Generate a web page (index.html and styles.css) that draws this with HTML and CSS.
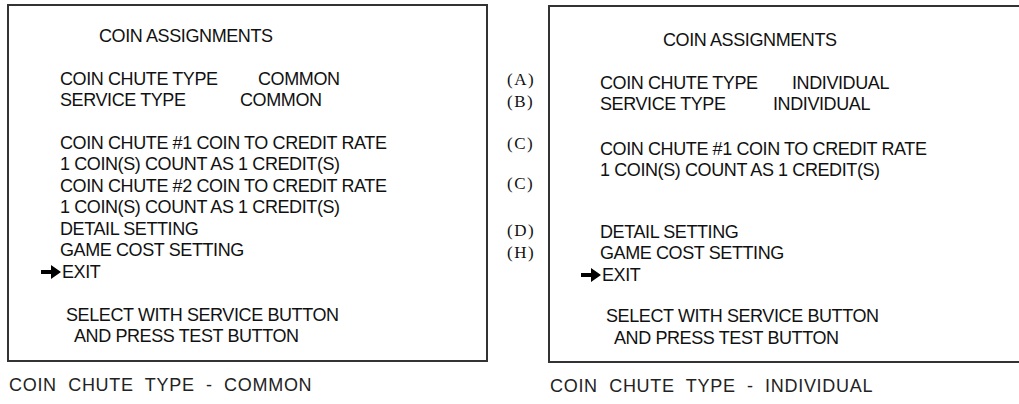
FILE: index.html
```html
<!DOCTYPE html>
<html lang="en">
<head>
  <meta charset="UTF-8" />
  <title>Coin Assignments</title>
  <link rel="stylesheet" href="styles.css">
</head>
<body>

  <div class="panel panel-common">
    <div class="screen">
      <div class="title">COIN ASSIGNMENTS</div>
      <div class="line gap-a"><span class="key">COIN CHUTE TYPE</span><span class="val-chute">COMMON</span></div>
      <div class="line"><span class="key">SERVICE TYPE</span><span class="val-service">COMMON</span></div>
      <div class="line gap-b">COIN CHUTE #1 COIN TO CREDIT RATE</div>
      <div class="line">1 COIN(S) COUNT AS 1 CREDIT(S)</div>
      <div class="line">COIN CHUTE #2 COIN TO CREDIT RATE</div>
      <div class="line">1 COIN(S) COUNT AS 1 CREDIT(S)</div>
      <div class="line">DETAIL SETTING</div>
      <div class="line">GAME COST SETTING</div>
      <div class="line exit">
        <svg class="arrow" width="20" height="14" viewBox="0 0 20 14"><path d="M0 5h10V0l10 7-10 7V9H0z" fill="#000"/></svg>EXIT
      </div>
      <div class="line foot">SELECT WITH SERVICE BUTTON</div>
      <div class="line foot2">AND PRESS TEST BUTTON</div>
    </div>
    <div class="caption">COIN  CHUTE  TYPE  -  COMMON</div>
  </div>

  <div class="labels">
    <div class="tag tag-a">(A)</div>
    <div class="tag">(B)</div>
    <div class="tag tag-c">(C)</div>
    <div class="tag tag-c2">(C)</div>
    <div class="tag tag-d">(D)</div>
    <div class="tag">(H)</div>
  </div>

  <div class="panel panel-individual">
    <div class="screen">
      <div class="title">COIN ASSIGNMENTS</div>
      <div class="line gap-a"><span class="key">COIN CHUTE TYPE</span><span class="val-chute">INDIVIDUAL</span></div>
      <div class="line"><span class="key">SERVICE TYPE</span><span class="val-service">INDIVIDUAL</span></div>
      <div class="line gap-b">COIN CHUTE #1 COIN TO CREDIT RATE</div>
      <div class="line">1 COIN(S) COUNT AS 1 CREDIT(S)</div>
      <div class="line gap-d">DETAIL SETTING</div>
      <div class="line">GAME COST SETTING</div>
      <div class="line exit">
        <svg class="arrow" width="20" height="14" viewBox="0 0 20 14"><path d="M0 5h10V0l10 7-10 7V9H0z" fill="#000"/></svg>EXIT
      </div>
      <div class="line foot">SELECT WITH SERVICE BUTTON</div>
      <div class="line foot2">AND PRESS TEST BUTTON</div>
    </div>
    <div class="caption">COIN  CHUTE  TYPE  -  INDIVIDUAL</div>
  </div>

</body>
</html>
```

FILE: styles.css
```css
body {
  margin: 0;
  background: #fff;
  color: #111;
  font-family: "Liberation Sans", Arial, sans-serif;
  display: flex;
  align-items: flex-start;
  overflow: hidden;
}
.panel {
  display: flex;
  flex-direction: column;
  flex-shrink: 0;
}
.panel-common {
  margin: 4px 0 0 7px;
  width: 481px;
}
.panel-individual {
  margin: 5px 0 0 0;
  width: 500px;
}
.screen {
  border: 2px solid #333;
  height: 358px;
  box-sizing: border-box;
  font-size: 18px;
  line-height: 21.5px;
  letter-spacing: -0.4px;
}
.panel-common .screen {
  padding: 20px 0 0 51px;
}
.panel-individual .screen {
  padding: 23px 0 0 50px;
}
.title {
  margin-left: 39px;
}
.panel-individual .title {
  margin-left: 63px;
}
.line {
  white-space: nowrap;
}
.key {
  display: inline-block;
}
.panel-common .key {
  width: 198px;
}
.panel-common .line + .line .key {
  width: 180px;
}
.panel-individual .key {
  width: 192px;
}
.panel-individual .line + .line .key {
  width: 173px;
}
.gap-a {
  margin-top: 21px;
}
.panel-common .gap-a {
  margin-top: 21px;
}
.gap-b {
  margin-top: 23px;
}
.panel-common .gap-b {
  margin-top: 21px;
}
.gap-d {
  margin-top: 40px;
}
.exit {
  margin-left: -19px;
  display: flex;
  align-items: center;
}
.arrow {
  margin-right: 1px;
}
.foot {
  margin-top: 21.5px;
  margin-left: 6px;
}
.panel-individual .foot {
  margin-top: 20px;
}
.foot2 {
  margin-left: 14px;
}
.caption {
  margin: 13px 0 0 2px;
  font-size: 18px;
  letter-spacing: 0.7px;
  white-space: pre;
  color: #222;
}
.labels {
  width: 60px;
  flex-shrink: 0;
  padding-top: 69px;
  font-family: "Liberation Serif", "Times New Roman", serif;
  font-size: 17px;
  letter-spacing: 1.5px;
  line-height: 22px;
  padding-left: 19px;
  box-sizing: border-box;
}
.tag-c {
  margin-top: 20px;
}
.tag-c2 {
  margin-top: 18px;
}
.tag-d {
  margin-top: 25px;
}
```
